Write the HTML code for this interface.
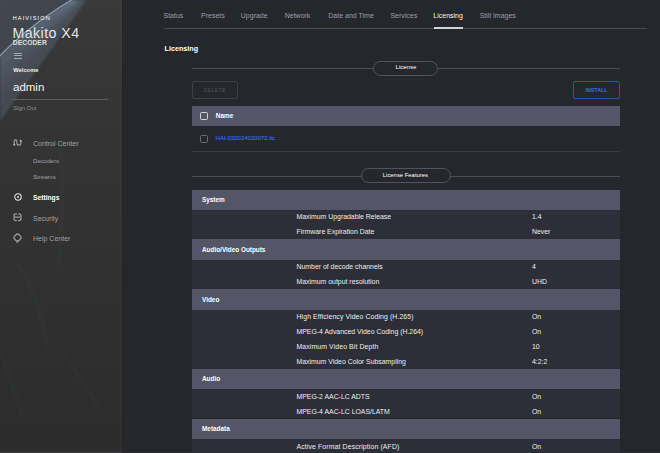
<!DOCTYPE html>
<html><head><meta charset="utf-8">
<style>
*{margin:0;padding:0;box-sizing:border-box}
html,body{width:660px;height:453px;overflow:hidden;background:#26272c}
body{position:relative;font-family:"Liberation Sans",sans-serif;color:#fff}
.a{position:absolute;white-space:nowrap;line-height:1}
#side{position:absolute;left:0;top:0;width:122px;height:453px;overflow:hidden;background:#303132}
.nav{font-size:7px;color:#9c9ea9;top:12.4px}
.ln{position:absolute;height:1px}
.pill{position:absolute;border:1px solid #53545f;border-radius:8px;background:#26272c}
.btn{position:absolute;border:1px solid #3b3c44;border-radius:2px}
.hdr{position:absolute;left:192px;width:428px;background:#545667}
.body{position:absolute;left:192px;width:428px;background:#2d2e37}
.ht{font-size:6.4px;font-weight:700;color:#fff;left:202px}
.lb{font-size:6.9px;color:#eeeef0;left:296.5px}
.vl{font-size:6.9px;color:#eeeef0;left:532px}
.cb{position:absolute;width:8px;height:8px;border-radius:1.5px}
.sn{font-size:7px;color:#a0a1a5;left:33px}
.ss{font-size:6.1px;color:#a0a1a5;left:33px}
</style></head><body>
<div id="side">
  <svg width="122" height="453" style="position:absolute;left:0;top:0">
    <defs>
      <linearGradient id="sg" x1="0" y1="0" x2="0" y2="1">
        <stop offset="0" stop-color="#383938"/>
        <stop offset="0.3" stop-color="#333433"/>
        <stop offset="1" stop-color="#2b2c2b"/>
      </linearGradient>
      <linearGradient id="tri" x1="0" y1="0" x2="1" y2="1">
        <stop offset="0" stop-color="#40454c"/>
        <stop offset="1" stop-color="#3c4046"/>
      </linearGradient>
      <filter id="bl" x="-20%" y="-20%" width="140%" height="140%"><feGaussianBlur stdDeviation="0.9"/></filter>
      <filter id="bl5" x="-20%" y="-20%" width="140%" height="140%"><feGaussianBlur stdDeviation="0.5"/></filter>
      <filter id="bl3" x="-50%" y="-20%" width="200%" height="140%"><feGaussianBlur stdDeviation="2"/></filter>
      <clipPath id="rc"><path d="M72 0 Q27 27 0 56 L0 120 Q43 60 86 0 Z"/></clipPath>
      <pattern id="hatch" width="2.4" height="2.4" patternUnits="userSpaceOnUse" patternTransform="rotate(25)">
        <rect width="0.9" height="2.4" fill="#8090a0" fill-opacity="0.09"/>
      </pattern>
    </defs>
    <rect width="122" height="453" fill="url(#sg)"/>
    <path d="M0 0 L72 0 Q27 27 0 56 Z" fill="url(#tri)"/>
    <path d="M0 0 L72 0 Q27 27 0 56 Z" fill="url(#hatch)"/>
    <g filter="url(#bl3)" fill="none" stroke="#6a7888">
      <path d="M16 262 Q38 290 48 350" stroke-opacity="0.07" stroke-width="2.5"/>
      <path d="M0 350 Q12 385 24 420" stroke-opacity="0.07" stroke-width="2.5"/>
      <path d="M60 140 Q65 200 58 270" stroke-opacity="0.07" stroke-width="3"/>
      <path d="M62 352 Q80 375 100 410" stroke-opacity="0.04" stroke-width="5"/>
    </g>
    <g filter="url(#bl)"><g clip-path="url(#rc)"><path d="M72 0 Q27 27 0 56 L0 120 Q43 60 86 0 Z" fill="#4f5866" fill-opacity="0.5"/><path d="M74.4 -2.0 Q27.5 28.0 -2.0 60.0" stroke="#7890aa" stroke-opacity="0.323" stroke-width="2.6" fill="none"/><path d="M75.3 -2.0 Q28.5 30.1 -2.0 64.0" stroke="#7890aa" stroke-opacity="0.291" stroke-width="2.6" fill="none"/><path d="M76.2 -2.0 Q29.5 32.2 -2.0 68.0" stroke="#7890aa" stroke-opacity="0.261" stroke-width="2.6" fill="none"/><path d="M77.1 -2.0 Q30.5 34.2 -2.0 72.0" stroke="#7890aa" stroke-opacity="0.232" stroke-width="2.6" fill="none"/><path d="M77.9 -2.0 Q31.5 36.3 -2.0 76.0" stroke="#7890aa" stroke-opacity="0.206" stroke-width="2.6" fill="none"/><path d="M78.8 -2.0 Q32.5 38.3 -2.0 80.0" stroke="#7890aa" stroke-opacity="0.181" stroke-width="2.6" fill="none"/><path d="M79.7 -2.0 Q33.5 40.4 -2.0 84.0" stroke="#7890aa" stroke-opacity="0.157" stroke-width="2.6" fill="none"/><path d="M80.6 -2.0 Q34.5 42.5 -2.0 88.0" stroke="#7890aa" stroke-opacity="0.136" stroke-width="2.6" fill="none"/><path d="M81.4 -2.0 Q35.5 44.5 -2.0 92.0" stroke="#7890aa" stroke-opacity="0.117" stroke-width="2.6" fill="none"/><path d="M82.3 -2.0 Q36.5 46.6 -2.0 96.0" stroke="#7890aa" stroke-opacity="0.099" stroke-width="2.6" fill="none"/><path d="M83.2 -2.0 Q37.5 48.7 -2.0 100.0" stroke="#7890aa" stroke-opacity="0.084" stroke-width="2.6" fill="none"/><path d="M84.1 -2.0 Q38.5 50.7 -2.0 104.0" stroke="#7890aa" stroke-opacity="0.071" stroke-width="2.6" fill="none"/><path d="M84.9 -2.0 Q39.5 52.8 -2.0 108.0" stroke="#7890aa" stroke-opacity="0.059" stroke-width="2.6" fill="none"/><path d="M85.8 -2.0 Q40.5 54.8 -2.0 112.0" stroke="#7890aa" stroke-opacity="0.051" stroke-width="2.6" fill="none"/><path d="M86.7 -2.0 Q41.5 56.9 -2.0 116.0" stroke="#7890aa" stroke-opacity="0.044" stroke-width="2.6" fill="none"/><path d="M87.6 -2.0 Q42.5 59.0 -2.0 120.0" stroke="#7890aa" stroke-opacity="0.041" stroke-width="2.6" fill="none"/></g><path d="M87 -1 Q43 60 -1 121" stroke="#6f8094" stroke-opacity="0.2" stroke-width="1.5" fill="none"/></g><g filter="url(#bl5)"><path d="M73 -1 Q27 27 -1 57" stroke="#9aacc2" stroke-opacity="0.85" stroke-width="1.2" fill="none"/></g>
  </svg>
  <div class="a" style="left:12.7px;top:15.8px;font-size:5.5px;font-weight:400;letter-spacing:1.15px;color:#f4f4f6;-webkit-text-stroke:0.05px #f0f0f2">HAIVISION</div>
  <div class="a" style="left:12.4px;top:25.6px;font-size:14.2px;letter-spacing:0.45px;color:#f6f6f8;-webkit-text-stroke:0.2px rgba(52,54,58,0.6)">Makito X4</div>
  <div class="a" style="left:12.8px;top:39.9px;font-size:6.8px;font-weight:700;letter-spacing:0px;color:#dcdcde">DECODER</div>
  <div style="position:absolute;left:14px;top:52.5px;width:8px;height:1px;background:#a9aaad"></div>
  <div style="position:absolute;left:14px;top:55.3px;width:8px;height:1px;background:#a9aaad"></div>
  <div style="position:absolute;left:14px;top:58.1px;width:8px;height:1px;background:#a9aaad"></div>
  <div class="a" style="left:13.3px;top:67.5px;font-size:5.75px;font-weight:700;color:#f4f0e0">Welcome</div>
  <div class="a" style="left:13px;top:81.6px;font-size:11.5px;color:#f2f2f2">admin</div>
  <div class="ln" style="left:13px;top:99px;width:95px;background:#5b5c60"></div>
  <div class="a" style="left:13.2px;top:104.8px;font-size:6px;color:#909195">Sign Out</div>

  <svg width="10" height="10" style="position:absolute;left:13px;top:138px" viewBox="0 0 10 10"><path d="M1.2 6.6 L1.2 3.6 Q1.2 1.9 2.55 1.9 Q3.9 1.9 3.9 3.6 L3.9 5.4 Q3.9 7.1 5.9 7.1 Q7.9 7.1 7.9 5.4 L7.9 3.2" stroke="#a3a4a8" stroke-width="1.1" fill="none"/><circle cx="1.3" cy="6.7" r="1.05" fill="#b0b1b5"/><circle cx="7.8" cy="2.9" r="1.05" fill="#b0b1b5"/></svg>
  <div class="a sn" style="top:140.3px">Control Center</div>
  <div class="a ss" style="top:157.6px">Decoders</div>
  <div class="a ss" style="top:174.4px">Streams</div>

  <svg width="10" height="10" style="position:absolute;left:12.5px;top:191.6px" viewBox="0 0 10 10"><circle cx="5" cy="5" r="3.2" stroke="#e6e6e8" stroke-width="1.05" fill="none"/><circle cx="5" cy="5" r="0.9" fill="#f4f4f4"/></svg>
  <div class="a sn" style="top:194.6px;font-weight:700;color:#fff;font-size:6.7px">Settings</div>

  <svg width="10" height="10" style="position:absolute;left:13px;top:212.6px" viewBox="0 0 10 10"><path d="M1 3.4 L1 2.8 Q1 0.8 3 0.8 L3.9 0.8 M5.1 0.8 L6 0.8 Q8 0.8 8 2.8 L8 3.4 M8 5 L8 5.6 Q8 7.6 6 7.6 L5.1 7.6 M3.9 7.6 L3 7.6 Q1 7.6 1 5.6 L1 5 M0.4 4.2 L8.6 4.2" stroke="#9a9ba0" stroke-width="1.3" fill="none"/></svg>
  <div class="a sn" style="top:215px">Security</div>

  <svg width="10" height="11" style="position:absolute;left:13.2px;top:232.6px" viewBox="0 0 10 11"><path d="M4.5 1 Q5.3 1 6.3 2 L7.2 2.9 Q8.2 3.9 8.2 4.6 Q8.2 5.3 7.2 6.3 L6.3 7.2 Q5.5 8 4.5 8 Q3.5 8 2.7 7.2 L1.8 6.3 Q0.8 5.3 0.8 4.6 Q0.8 3.9 1.8 2.9 L2.7 2 Q3.7 1 4.5 1 Z" stroke="#9a9ba0" stroke-width="1.3" fill="none"/><path d="M5 7.8 L4 9.4" stroke="#9a9ba0" stroke-width="1.3" stroke-linecap="round"/></svg>
  <div class="a sn" style="top:235.3px">Help Center</div>
</div>
<div style="position:absolute;left:120px;top:0;width:2px;height:453px;background:rgba(255,250,230,0.025)"></div><div style="position:absolute;left:122px;top:0;width:1px;height:453px;background:#22232a"></div>
<div style="position:absolute;left:0;top:452px;width:122px;height:1px;background:#34404a"></div><div style="position:absolute;left:122px;top:452px;width:538px;height:1px;background:#2a2c33"></div>

<!-- top nav -->
<div class="a nav" style="left:163.5px">Status</div>
<div class="a nav" style="left:201px">Presets</div>
<div class="a nav" style="left:240.8px">Upgrade</div>
<div class="a nav" style="left:284.7px">Network</div>
<div class="a nav" style="left:328.3px">Date and Time</div>
<div class="a nav" style="left:390.4px">Services</div>
<div class="a nav" style="left:433.3px;color:#f4f4f6">Licensing</div>
<div class="a nav" style="left:479.7px">Still Images</div>
<div class="ln" style="left:164px;top:28px;width:483px;background:#4a4a56"></div>
<div style="position:absolute;left:433.6px;top:27px;width:29.4px;height:2px;background:#d2d3d6"></div>

<div class="a" style="left:164.5px;top:45px;font-size:7.2px;font-weight:700;color:#fff">Licensing</div>

<!-- license section -->
<div class="ln" style="left:192px;top:68px;width:428px;background:#4b4c57"></div>
<div class="pill" style="left:373px;top:60.5px;width:65px;height:15.5px"></div>
<div class="a" style="left:395.6px;top:64.3px;font-size:6px;color:#fff">License</div>

<div class="btn" style="left:192px;top:81px;width:46px;height:18px;border-color:#3d3e46"></div>
<div class="a" style="left:203.8px;top:87.6px;font-size:5.2px;color:#50525e;letter-spacing:0.3px">DELETE</div>
<div class="btn" style="left:573px;top:81px;width:47px;height:18px;border-color:#2856ac"></div>
<div class="a" style="left:585.4px;top:87.6px;font-size:5.2px;color:#3a6ee6;font-weight:700;letter-spacing:0.1px">INSTALL</div>

<div class="hdr" style="top:106px;height:20px"></div>
<div class="cb" style="left:200px;top:111.8px;border:1.5px solid #d4d4d8"></div>
<div class="a" style="left:215.8px;top:113.3px;font-size:6.4px;font-weight:700;color:#fff">Name</div>
<div class="cb" style="left:200px;top:134.7px;border:1.2px solid #6b6c72"></div>
<div class="a" style="left:215.6px;top:135px;font-size:6px;color:#2d6ef6;-webkit-text-stroke:0.12px #2d6ef6">HAI-032024020072.lic</div>
<div class="ln" style="left:192px;top:151px;width:428px;background:#393a42"></div>

<!-- features -->
<div class="ln" style="left:192px;top:176px;width:428px;background:#4b4c57"></div>
<div class="pill" style="left:361px;top:168px;width:89.5px;height:15px"></div>
<div class="a" style="left:382.8px;top:173px;font-size:5.9px;color:#fff">License Features</div>

<div class="hdr" style="top:189.5px;height:20.5px"></div>
<div class="a ht" style="top:197px">System</div>
<div class="body" style="top:210px;height:29.4px"></div>
<div class="a lb" style="top:214.4px">Maximum Upgradable Release</div>
<div class="a vl" style="top:214.4px">1.4</div>
<div class="a lb" style="top:229px">Firmware Expiration Date</div>
<div class="a vl" style="top:229px">Never</div>

<div class="hdr" style="top:239.4px;height:20.5px"></div>
<div class="a ht" style="top:247px">Audio/Video Outputs</div>
<div class="body" style="top:259.9px;height:29.4px"></div>
<div class="a lb" style="top:264.4px">Number of decode channels</div>
<div class="a vl" style="top:264.4px">4</div>
<div class="a lb" style="top:279px">Maximum output resolution</div>
<div class="a vl" style="top:279px">UHD</div>

<div class="hdr" style="top:289.3px;height:20.5px"></div>
<div class="a ht" style="top:296.8px">Video</div>
<div class="body" style="top:309.8px;height:58.8px"></div>
<div class="a lb" style="top:314.2px;letter-spacing:0.1px">High Efficiency Video Coding (H.265)</div>
<div class="a vl" style="top:314.2px">On</div>
<div class="a lb" style="top:328.9px">MPEG-4 Advanced Video Coding (H.264)</div>
<div class="a vl" style="top:328.9px">On</div>
<div class="a lb" style="top:343.6px;letter-spacing:0.1px">Maximum Video Bit Depth</div>
<div class="a vl" style="top:343.6px">10</div>
<div class="a lb" style="top:358.9px">Maximum Video Color Subsampling</div>
<div class="a vl" style="top:358.9px">4:2:2</div>

<div class="hdr" style="top:368.6px;height:20.5px"></div>
<div class="a ht" style="top:376.2px">Audio</div>
<div class="body" style="top:389.1px;height:29.4px"></div>
<div class="a lb" style="top:393.5px">MPEG-2 AAC-LC ADTS</div>
<div class="a vl" style="top:393.5px">On</div>
<div class="a lb" style="top:408.7px">MPEG-4 AAC-LC LOAS/LATM</div>
<div class="a vl" style="top:408.7px">On</div>

<div class="hdr" style="top:418.5px;height:20.5px"></div>
<div class="a ht" style="top:426px">Metadata</div>
<div class="body" style="top:439px;height:14px"></div>
<div class="a lb" style="top:443.8px;letter-spacing:0.12px">Active Format Description (AFD)</div>
<div class="a vl" style="top:443.8px">On</div>
</body></html>
